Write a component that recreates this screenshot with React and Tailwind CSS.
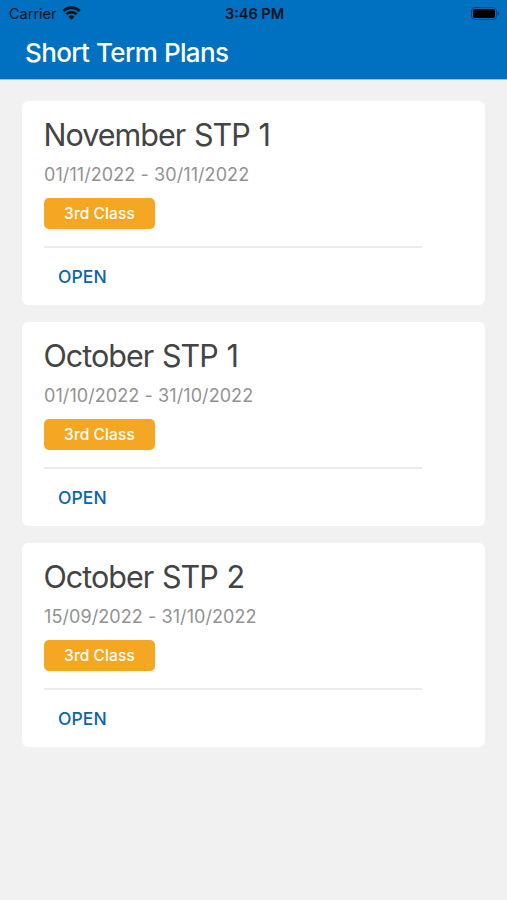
import React from 'react';

const plans = [
  { id: 1, title: 'November STP 1', dates: '01/11/2022 - 30/11/2022', level: '3rd Class' },
  { id: 2, title: 'October STP 1', dates: '01/10/2022 - 31/10/2022', level: '3rd Class' },
  { id: 3, title: 'October STP 2', dates: '15/09/2022 - 31/10/2022', level: '3rd Class' },
];

function WifiIcon() {
  return (
    <svg width="19" height="14" viewBox="0 0 19 14" fill="none" stroke="#03121f" strokeWidth="2.7">
      <path d="M1.2 5a11.7 11.7 0 0 1 16.600 0" />
      <path d="M4.300 8.300a7.400 7.400 0 0 1 10.400 0" />
      <path d="M9.500 13.800 6.500 10.700a4.300 4.300 0 0 1 6 0z" fill="#03121f" stroke="none" />
    </svg>
  );
}

function BatteryIcon() {
  return (
    <svg width="29" height="13" viewBox="0 0 29 13" fill="none">
      <rect x="0.5" y="0.5" width="25" height="12" rx="3.5" stroke="#03121f" strokeOpacity="0.4" />
      <rect x="2" y="2" width="22" height="9" rx="2" fill="#000" />
      <path d="M26.700 4.500c1.800.6 1.800 3.400 0 4z" fill="#03121f" fillOpacity="0.45" />
    </svg>
  );
}

function StatusBar() {
  return (
    <div className="grid h-7 grid-cols-3 items-center pr-[7px] pl-[9px] text-[#03121f]">
      <div className="flex items-center gap-[5px] text-[14.5px]">
        <span>Carrier</span>
        <div className="-mt-[3px]">
          <WifiIcon />
        </div>
      </div>
      <div className="text-center text-[14.5px] font-semibold">3:46 PM</div>
      <div className="-mt-[2px] flex justify-end">
        <BatteryIcon />
      </div>
    </div>
  );
}

function PlanCard({ plan }) {
  return (
    <div className="h-[204px] rounded-md bg-white px-[22px] pt-[14px]">
      <h2 className="-ml-[0.5px] text-[30.5px] leading-10 tracking-[-1px] text-[#444] [word-spacing:1.2px]">{plan.title}</h2>
      <p className="mt-2 text-[18px] leading-6 tracking-[0.08px] text-[#929292]">{plan.dates}</p>
      <div className="mt-[11px] flex h-[31px] w-[111px] items-center justify-center rounded-[5px] bg-[#f5a623] pt-px text-[15.5px] font-[450] tracking-[0.1px] text-white">
        {plan.level}
      </div>
      <div className="mt-[17px] w-[378px] border-t-2 border-[#ebebeb]" />
      <button className="ml-[14px] mt-[17px] block text-[17.5px] leading-6 font-medium tracking-[0.1px] text-[#0b65a9]">
        OPEN
      </button>
    </div>
  );
}

export default function App() {
  return (
    <div className="min-h-screen bg-[#f1f1f1] font-['Inter',sans-serif]">
      <header className="h-20 border-b border-[#8ec2e8] bg-[#0070c0]">
        <StatusBar />
        <h1 className="pt-[9px] pl-[25px] text-[26px] leading-8 font-medium tracking-[-0.65px] text-white [word-spacing:0.5px]">
          Short Term Plans
        </h1>
      </header>
      <main className="flex flex-col gap-[17px] px-[22px] pt-[21px]">
        {plans.map((plan) => (
          <PlanCard key={plan.id} plan={plan} />
        ))}
      </main>
    </div>
  );
}
